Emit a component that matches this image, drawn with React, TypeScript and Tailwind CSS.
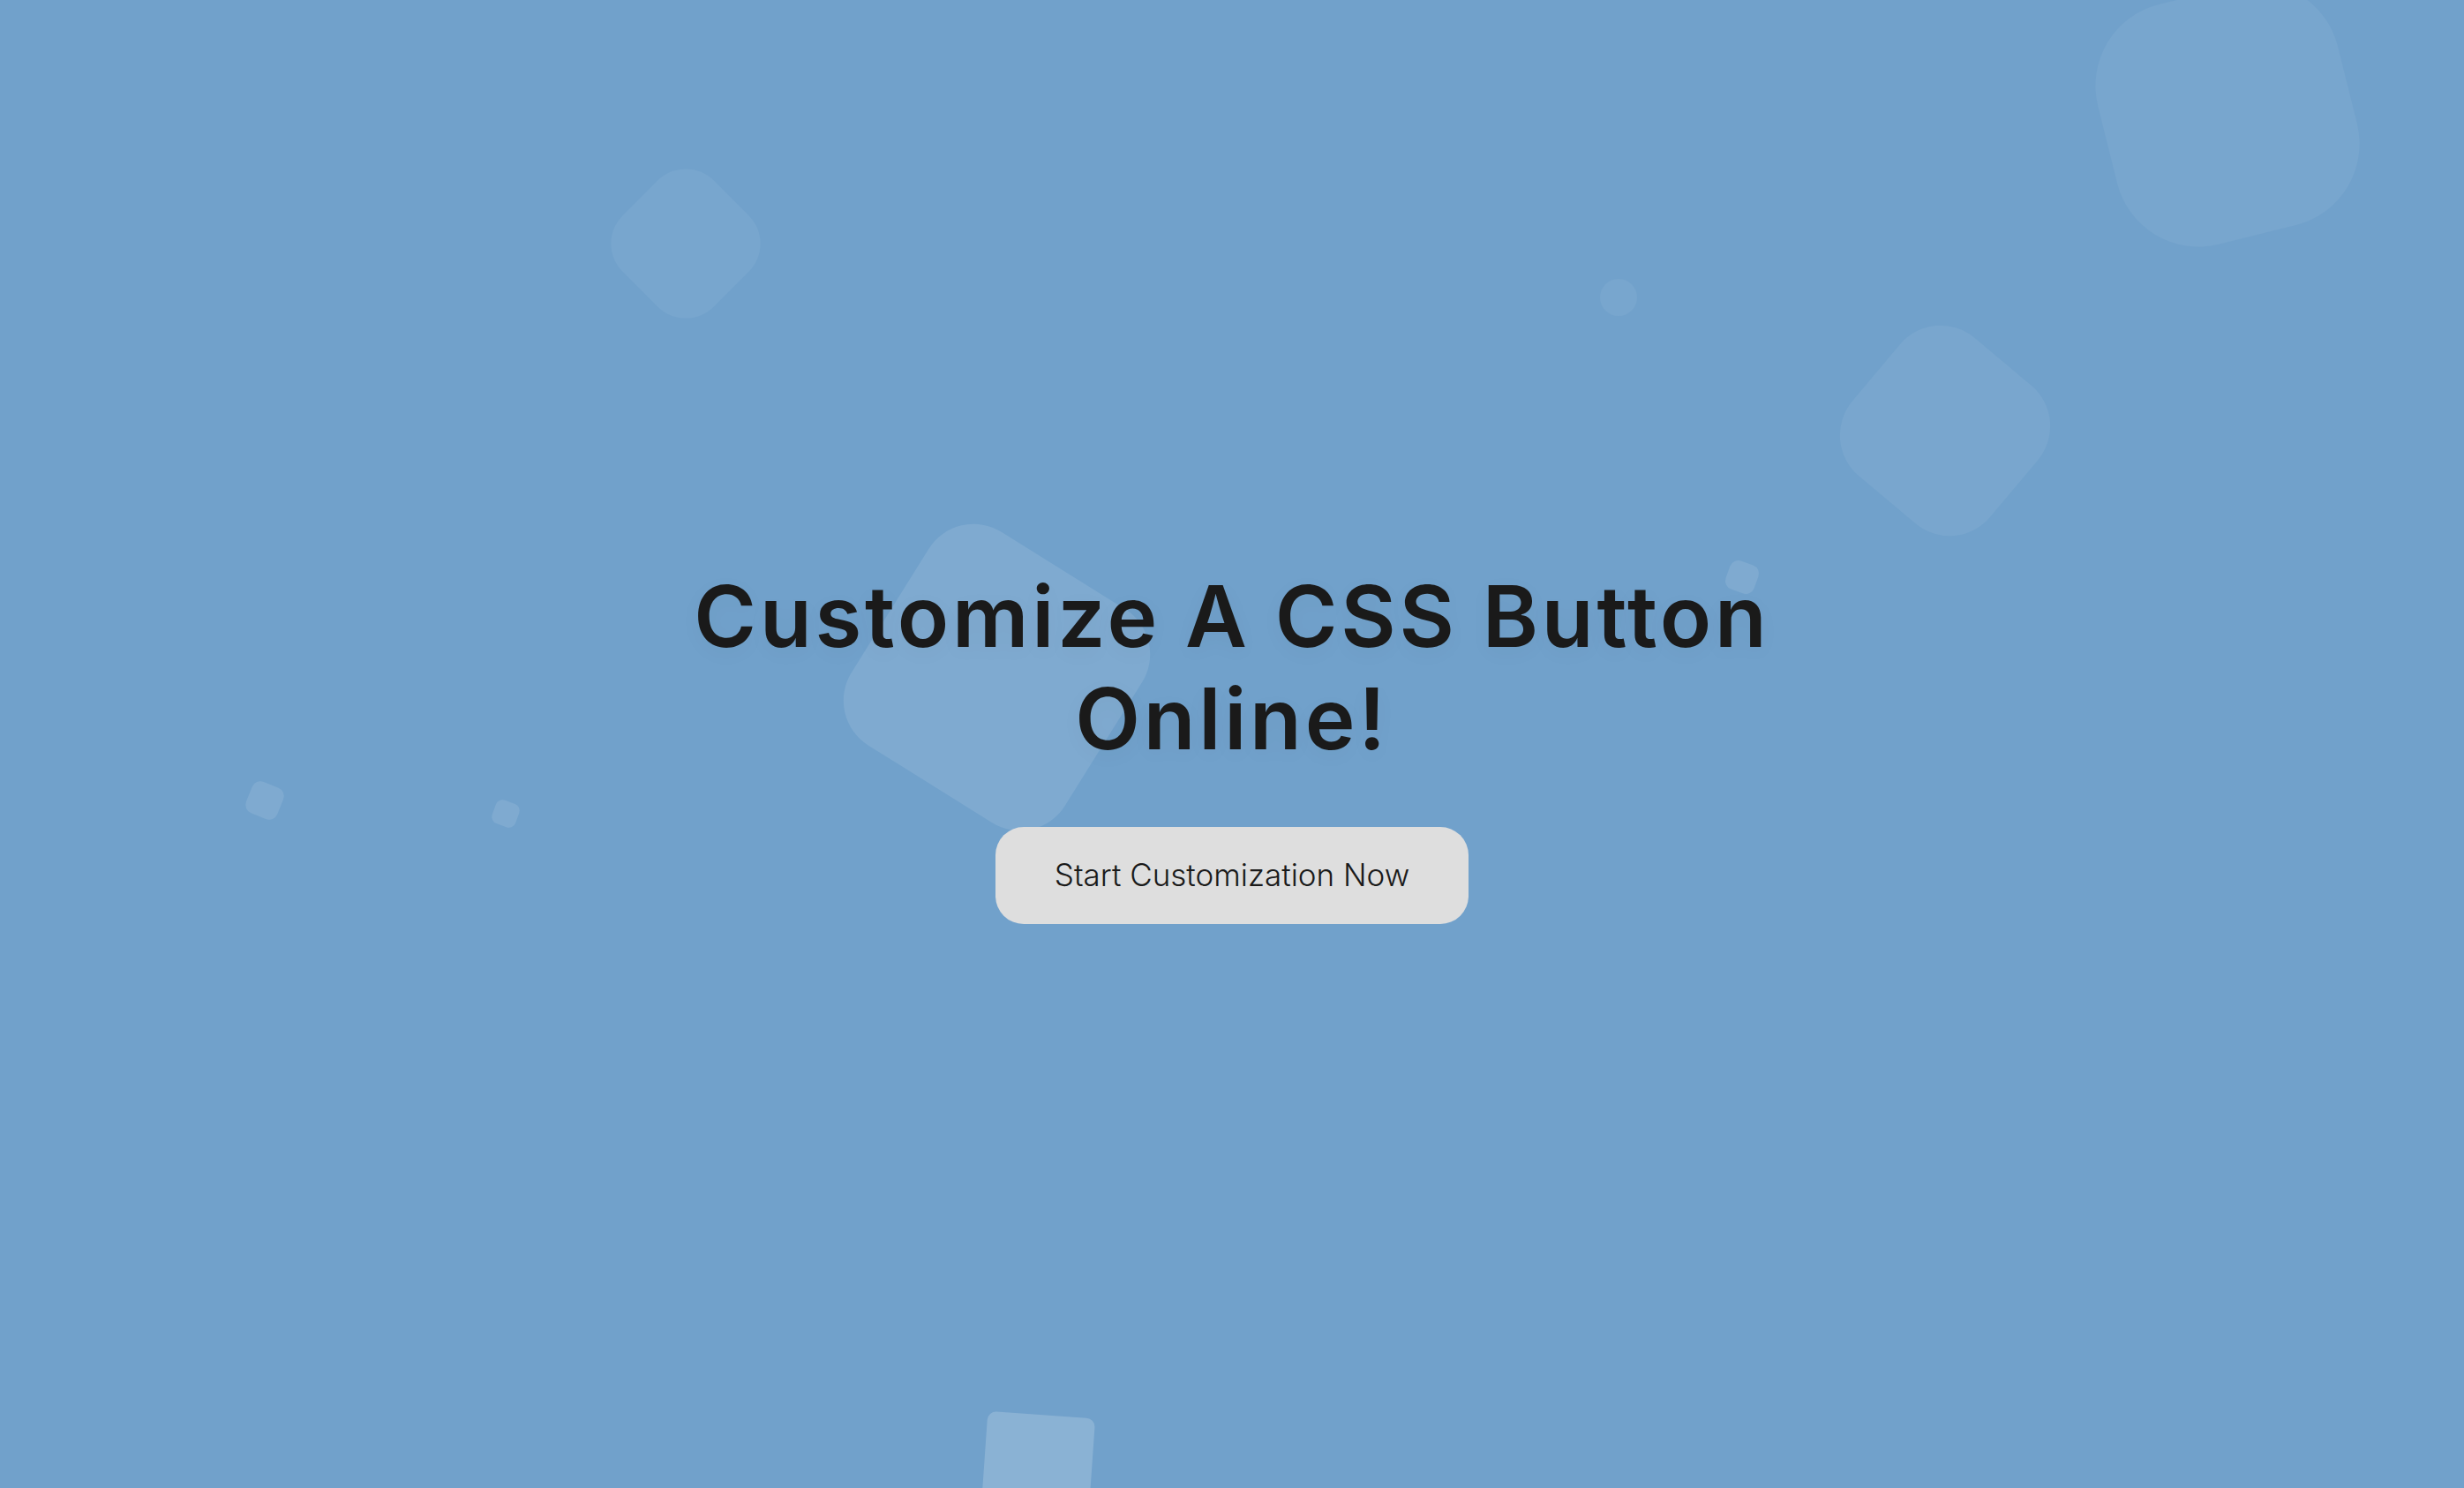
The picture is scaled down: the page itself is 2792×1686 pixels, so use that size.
export default function App() {
  return (
    <div className="relative w-full h-screen overflow-hidden bg-[#71a1cb] font-['Inter','Liberation_Sans',sans-serif]">
      {/* floating squares in the background */}
      <div className="absolute left-[2384px] top-[-10px] w-[280px] h-[280px] rounded-[95px] bg-white/[0.05] rotate-[-14deg]"></div>
      <div className="absolute left-[704px] top-[203px] w-[146px] h-[146px] rounded-[45px] bg-white/[0.05] rotate-45"></div>
      <div className="absolute left-[1813px] top-[316px] w-[42px] h-[42px] rounded-full bg-white/[0.05]"></div>
      <div className="absolute left-[2102px] top-[386px] w-[204px] h-[204px] rounded-[60px] bg-white/[0.06] rotate-[40deg]"></div>
      <div className="absolute left-[1957px] top-[637px] w-[34px] h-[34px] rounded-[10px] bg-white/[0.1] rotate-[20deg]"></div>
      <div className="absolute left-[987px] top-[625px] w-[285px] h-[285px] rounded-[60px] bg-white/[0.1] rotate-[32deg]"></div>
      <div className="absolute left-[281px] top-[888px] w-[38px] h-[38px] rounded-[10px] bg-white/[0.1] rotate-[22deg]"></div>
      <div className="absolute left-[559px] top-[908px] w-[28px] h-[28px] rounded-[8px] bg-white/[0.1] rotate-[20deg]"></div>
      <div className="absolute left-[1115px] top-[1603px] w-[122px] h-[122px] rounded-[10px] bg-white/[0.18] rotate-[4deg]"></div>

      <div className="relative h-full flex flex-col items-center justify-center">
        <h1 className="w-[1400px] text-center text-[96px] leading-[116px] font-semibold tracking-[3.8px] text-[#1a1a1a] [text-shadow:0_6px_24px_rgba(0,0,0,0.04)]">
          Customize A CSS Button Online!
        </h1>
        <button className="mt-[65px] w-[536px] h-[110px] rounded-[32px] bg-[#dedede] text-[35px] font-light text-[#1a1a1a]">
          Start Customization Now
        </button>
      </div>
    </div>
  );
}
